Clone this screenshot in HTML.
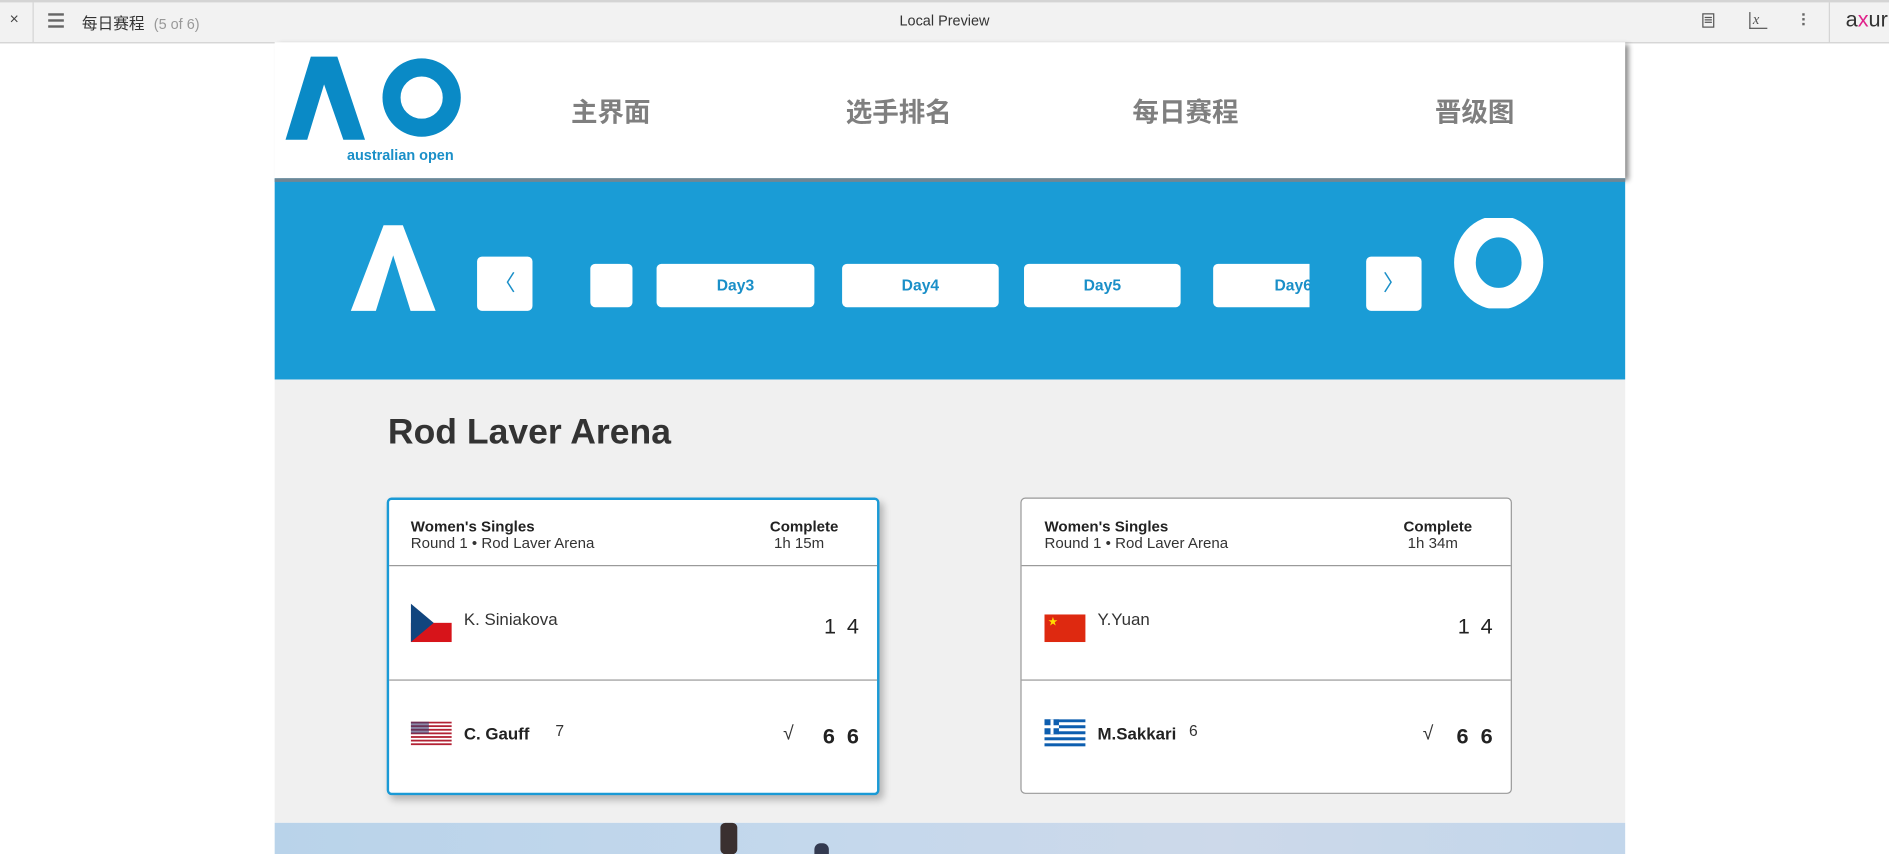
<!DOCTYPE html>
<html><head><meta charset="utf-8"><style>
html,body{margin:0;padding:0;width:1889px;height:854px;overflow:hidden;background:#fff;}
#s{position:absolute;left:0;top:0;width:1568px;height:709px;transform:scale(1.20472);transform-origin:0 0;font-family:"Liberation Sans","Noto Sans CJK SC",sans-serif;}
.a{position:absolute;}
.top{left:0;top:0;width:1568px;height:33px;background:#f2f2f2;border-top:2px solid #d4d4d4;border-bottom:1px solid #d0d0d0;}
.nav{font-size:22px;font-weight:bold;color:#7f7f7f;top:76px;}
.btn{background:#fff;border-radius:4px;color:#1a8fc8;font-weight:bold;font-size:13px;text-align:center;}
.card{background:#fff;border-radius:4px;box-sizing:border-box;}
.t1{font-size:12.5px;font-weight:bold;color:#222;}
.t2{font-size:12.5px;color:#333;}
.hr{height:1px;background:#999;}
</style></head><body><div id="s">
<div class="a top"></div>
<div class="a" style="left:27px;top:2px;width:1px;height:33px;background:#d4d4d4"></div>
<div class="a" style="left:1518px;top:2px;width:1px;height:33px;background:#d4d4d4"></div>
<div class="a" style="left:8px;top:8px;font-size:13px;color:#444">×</div>
<div class="a" style="left:40px;top:11px;width:13px;height:2px;background:#666;box-shadow:0 5px 0 #666,0 10px 0 #666"></div>
<div class="a" style="left:68px;top:9px;font-size:13px;color:#333">每日赛程 <span style="color:#999;font-size:12px;margin-left:4px">(5 of 6)</span></div>
<div class="a" style="left:0;width:1568px;top:10px;text-align:center;font-size:12px;color:#333">Local Preview</div>
<div class="a" style="left:1413px;top:11px;width:10px;height:12px;border:1px solid #555;box-sizing:border-box"></div>
<div class="a" style="left:1415px;top:14px;width:6px;height:1px;background:#555;box-shadow:0 2px 0 #555,0 4px 0 #555"></div>
<div class="a" style="left:1452px;top:10px;width:12px;height:13px;border-left:1.5px solid #555;border-bottom:1.5px solid #555;font-size:12px;font-style:italic;font-family:'Liberation Serif';line-height:12px;padding-left:2px;color:#555">x</div>
<div class="a" style="left:1496px;top:11px;width:2px;height:2px;background:#666;box-shadow:0 4px 0 #666,0 8px 0 #666"></div>
<div class="a" style="left:1532px;top:6px;font-size:18px;color:#333">a<span style="color:#e0218a">x</span>ur</div>

<div class="a" style="left:228px;top:35px;width:1121px;height:113px;background:#fff;box-shadow:3px 2px 4px rgba(0,0,0,.45)"></div>
<svg class="a" style="left:228px;top:35px" width="170" height="113">
<polygon points="9,81 30,12 52,12 75,81 57,81 41,35 27,81" fill="#0a8ac6"/>
<circle cx="122" cy="46" r="25" fill="none" stroke="#0a8ac6" stroke-width="15"/>
<text x="60" y="98" font-size="12" font-weight="bold" fill="#1a8fc8" font-family="Liberation Sans">australian open</text>
</svg>
<div class="a nav" style="left:474px">主界面</div>
<div class="a nav" style="left:702px">选手排名</div>
<div class="a nav" style="left:940px">每日赛程</div>
<div class="a nav" style="left:1191px">晋级图</div>

<div class="a" style="left:228px;top:148px;width:1121px;height:167px;background:#1a9cd6"></div>
<div class="a" style="left:228px;top:148px;width:1121px;height:3px;background:#6f8694"></div>
<svg class="a" style="left:288px;top:186px" width="80" height="75"><polygon points="2,72 19,1 29,1 46,72 33,72 24,26 15,72" fill="#fff" transform="scale(1.6,1)"/></svg>
<svg class="a" style="left:1206px;top:181px" width="78" height="75"><ellipse cx="38" cy="37" rx="28" ry="30" fill="none" stroke="#fff" stroke-width="18"/></svg>
<div class="a btn" style="left:396px;top:213px;width:46px;height:45px;line-height:45px;font-weight:normal;font-size:18px">〈</div>
<div class="a btn" style="left:490px;top:219px;width:35px;height:36px"></div>
<div class="a btn" style="left:545px;top:219px;width:131px;height:36px;line-height:36px">Day3</div>
<div class="a btn" style="left:699px;top:219px;width:130px;height:36px;line-height:36px">Day4</div>
<div class="a btn" style="left:850px;top:219px;width:130px;height:36px;line-height:36px">Day5</div>
<div class="a btn" style="left:1007px;top:219px;width:80px;height:36px;line-height:36px;border-radius:4px 0 0 4px;text-align:right;overflow:hidden"><span style="margin-right:-2px">Day6</span></div>
<div class="a btn" style="left:1134px;top:213px;width:46px;height:45px;line-height:45px;font-weight:normal;font-size:18px">〉</div>

<div class="a" style="left:228px;top:315px;width:1121px;height:368px;background:#f0f0f0"></div>
<div class="a" style="left:322px;top:342px;font-size:29.5px;font-weight:bold;color:#333">Rod Laver Arena</div>

<div class="a card" style="left:321px;top:413px;width:409px;height:247px;border:2px solid #1a9ad6;box-shadow:3px 4px 6px rgba(0,0,0,.25)"></div>
<div class="a card" style="left:847px;top:413px;width:408px;height:246px;border:1px solid #999"></div>

<div class="a" style="left:341px;top:430px"><div class="t1">Women's Singles</div><div class="t2">Round 1 • Rod Laver Arena</div></div>
<div class="a" style="left:639px;top:430px"><div class="t1">Complete</div><div class="t2">&nbsp;1h 15m</div></div>
<div class="a hr" style="left:323px;top:469px;width:405px"></div>
<div class="a hr" style="left:323px;top:564px;width:405px"></div>
<svg class="a" style="left:341px;top:501px" width="34" height="32"><rect width="34" height="16" fill="#fff"/><rect y="16" width="34" height="16" fill="#d7141a"/><polygon points="0,0 19,16 0,32" fill="#11457e"/></svg>
<div class="a" style="left:385px;top:506px;font-size:14px;color:#333">K. Siniakova</div>
<div class="a" style="left:684px;top:510px;font-size:18px;color:#222;word-spacing:4px">1 4</div>
<svg class="a" style="left:341px;top:599px" width="34" height="20"><rect width="34" height="20" fill="#fff"/><g fill="#b22234"><rect y="0" width="34" height="1.5"/><rect y="3" width="34" height="1.5"/><rect y="6" width="34" height="1.5"/><rect y="9" width="34" height="1.5"/><rect y="12" width="34" height="1.5"/><rect y="15" width="34" height="1.5"/><rect y="18" width="34" height="1.5"/></g><rect width="15" height="10" fill="#3c3b6e" opacity=".6"/></svg>
<div class="a" style="left:385px;top:601px;font-size:14px;font-weight:bold;color:#222">C. Gauff</div>
<div class="a" style="left:461px;top:599px;font-size:13px;color:#333">7</div>
<div class="a" style="left:650px;top:601px;font-size:16px;color:#333">√</div>
<div class="a" style="left:683px;top:601px;font-size:18px;font-weight:bold;color:#222;word-spacing:5px">6 6</div>

<div class="a" style="left:867px;top:430px"><div class="t1">Women's Singles</div><div class="t2">Round 1 • Rod Laver Arena</div></div>
<div class="a" style="left:1165px;top:430px"><div class="t1">Complete</div><div class="t2">&nbsp;1h 34m</div></div>
<div class="a hr" style="left:848px;top:469px;width:406px"></div>
<div class="a hr" style="left:848px;top:564px;width:406px"></div>
<svg class="a" style="left:867px;top:510px" width="34" height="23"><rect width="34" height="23" fill="#de2910"/><text x="3" y="9" font-size="8" fill="#ffde00">★</text></svg>
<div class="a" style="left:911px;top:506px;font-size:14px;color:#333">Y.Yuan</div>
<div class="a" style="left:1210px;top:510px;font-size:18px;color:#222;word-spacing:4px">1 4</div>
<svg class="a" style="left:867px;top:597px" width="34" height="23"><rect width="34" height="23" fill="#fff"/><g fill="#0d5eaf"><rect y="0" width="34" height="2.5"/><rect y="5" width="34" height="2.5"/><rect y="10" width="34" height="2.5"/><rect y="15" width="34" height="2.5"/><rect y="20" width="34" height="2.5"/><rect width="12" height="12.5"/></g><rect x="5" width="2.5" height="12.5" fill="#fff"/><rect y="5" width="12" height="2.5" fill="#fff"/></svg>
<div class="a" style="left:911px;top:601px;font-size:14px;font-weight:bold;color:#222">M.Sakkari</div>
<div class="a" style="left:987px;top:599px;font-size:13px;color:#333">6</div>
<div class="a" style="left:1181px;top:601px;font-size:16px;color:#333">√</div>
<div class="a" style="left:1209px;top:601px;font-size:18px;font-weight:bold;color:#222;word-spacing:5px">6 6</div>

<div class="a" style="left:228px;top:683px;width:1121px;height:26px;background:linear-gradient(90deg,#b9d3ea,#c4d8ec 40%,#cdd9ea 70%,#c2d6eb)"></div>
<div class="a" style="left:598px;top:683px;width:14px;height:26px;background:#3a3030;border-radius:4px"></div>
<div class="a" style="left:676px;top:700px;width:12px;height:9px;background:#333a50;border-radius:5px 5px 0 0"></div>
</div></body></html>
